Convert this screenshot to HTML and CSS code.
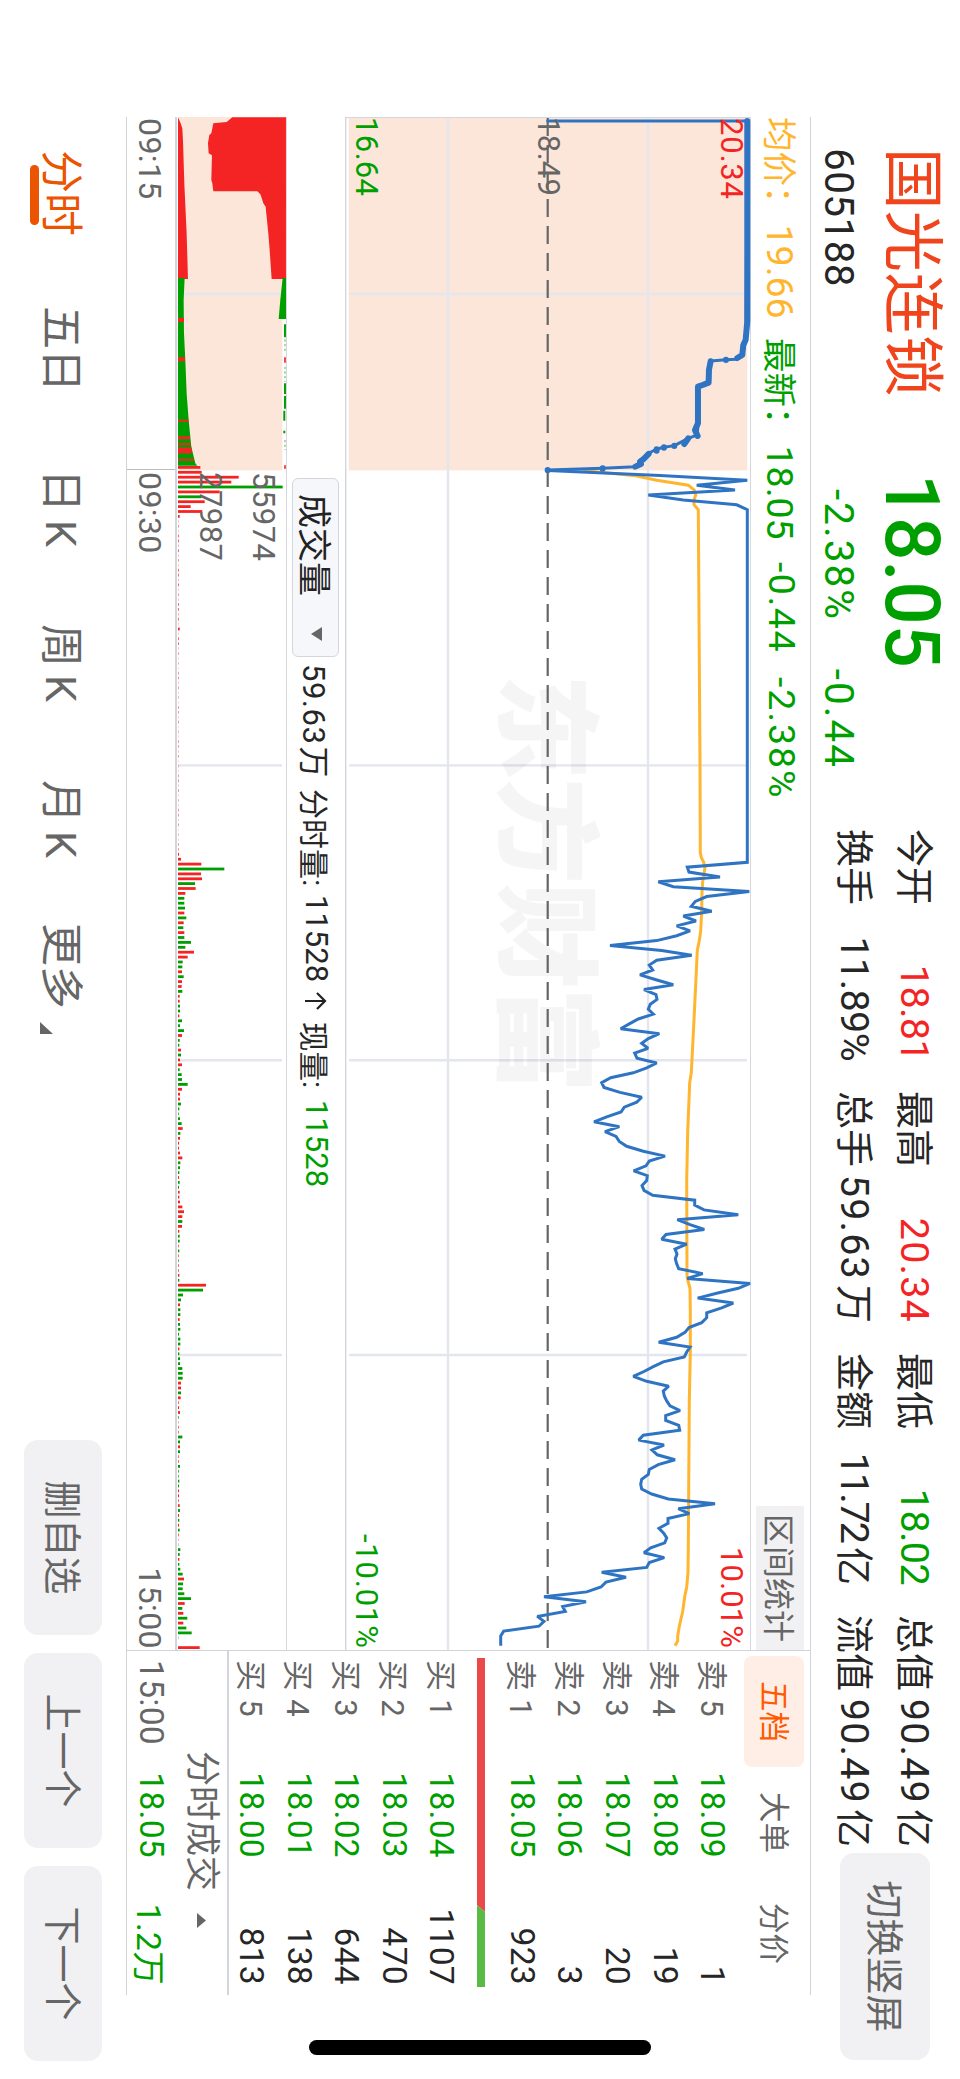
FILE: index.html
```html
<!DOCTYPE html>
<html lang="zh-CN">
<head>
    <meta charset="UTF-8">
    <meta name="viewport" content="width=device-width, initial-scale=1.0">
    <title>国光连锁 605188</title>
    <link rel="stylesheet" href="styles.css">
</head>
<body>
    <div class="screen">
        <!-- Quote header -->
        <header class="header">
            <div class="stock">
                <h1>国光连锁</h1>
                <p>605188</p>
            </div>
            <div class="quote green">
                <div class="price">18.05</div>
                <div class="change"><span>-2.38%</span><span>-0.44</span></div>
            </div>
            <div class="stats">
                <div><label>今开</label><span class="red narrow">18.81</span></div>
                <div><label>最高</label><span class="red">20.34</span></div>
                <div><label>最低</label><span class="green narrow">18.02</span></div>
                <div><label>总值</label><span>90.49<i>亿</i></span></div>
                <div><label>换手</label><span class="narrow">11.89%</span></div>
                <div><label>总手</label><span>59.63<i>万</i></span></div>
                <div><label>金额</label><span class="narrower">11.72<i>亿</i></span></div>
                <div><label>流值</label><span>90.49<i>亿</i></span></div>
            </div>
            <button class="btn btn-switch">切换竖屏</button>
        </header>

        <main class="main">
            <!-- Charts -->
            <section class="charts">
                <div class="info">
                    <span class="orange avg"><i>均价：</i>19.66</span>
                    <span class="green last"><i>最新：</i>18.05</span>
                    <span class="green diff">-0.44</span>
                    <span class="green pct">-2.38%</span>
                    <button class="range">区间统计</button>
                </div>

                <svg class="price-chart" viewBox="117 209 1533 406" width="1533" height="406">
                    <rect x="117" y="212.7" width="353.4" height="398.6" fill="#fce6d9"/>
                    <g stroke="#e4e6ee" stroke-width="2.4">
                        <path d="M117 312H1650M117 512H1650"/>
                        <path d="M294 213V611M765.4 213V611M1060.3 213V611M1355 213V611"/>
                    </g>
                    <path d="M117 209.5H1650M117.5 209V615" stroke="#d5d7dd" fill="none"/>
                    <path d="M117 614.6H1650" stroke="#d2d5db" stroke-width="2"/>
                    <text class="watermark" x="674" y="452" textLength="419">东方财富</text>
                    <path d="M117 412.3H1650" stroke="#666" stroke-width="2.2" stroke-dasharray="18 9" stroke-dashoffset="-1"/>
                    <polyline id="avgLine" fill="none" stroke="#ffb52e" stroke-width="3"/>
                    <polyline id="priceLine" fill="none" stroke="#2f74c3" stroke-width="3" stroke-miterlimit="2"/>
                    <g transform="translate(100 620) scale(.3333 -.3333)" fill="none" stroke="#2f74c3" stroke-linejoin="round" stroke-linecap="round">
                        <polyline stroke-width="9" points="63,623 63,1222 720,1218 765,1207 778,1190 779,1158 783,1112 848,1106 860,1074 970,1074 1005,1072 1015,1045 1037,1003 1042,972 1047,950 1060,926 1100,886 1105,788 1110,623"/>
                        <g stroke-width="18">
                            <path d="M63 1222H665L720 1217L735 1210L765 1207L774 1192"/>
                            <path d="M784 1112L810 1107L848 1106L855 1088L860 1074H970L990 1065L1008 1073"/>
                            <path d="M1015 1045L1032 1033M1048 950L1052 950M1062 926L1078 910L1085 900L1092 903L1100 886"/>
                            <path d="M779 1158h1M1037 1003h1M1042 972h1M1105 788h1M1110 623h1"/>
                        </g>
                    </g>
                    <text class="red" x="118" y="239" textLength="81">20.34</text>
                    <text class="gray" x="117" y="422" textLength="79">18.49</text>
                    <text class="green" x="117" y="604" textLength="79">16.64</text>
                    <text class="red" x="1547" y="239" textLength="101">10.01%</text>
                    <text class="green" x="1534" y="604" textLength="114">-10.01%</text>
                </svg>

                <div class="vol-info">
                    <button class="indicator">成交量
                        <svg width="14" height="11" viewBox="0 0 14 11"><path d="M0 0H14L7 11Z" fill="#666"/></svg>
                    </button>
                    <span class="v1">59.63<i>万</i></span>
                    <span class="v2">分时量:</span>
                    <span class="v3">11528</span>
                    <svg class="arrow" width="18" height="22" viewBox="0 0 18 22"><path d="M9 22V2M1 10L9 2L17 10" fill="none" stroke="#222" stroke-width="2.2"/></svg>
                    <span class="v4">现量:</span>
                    <span class="green">11528</span>
                </div>

                <svg class="vol-chart" viewBox="117 673 1533 112" width="1533" height="112">
                    <rect x="117" y="674" width="202" height="108" fill="#fce6d9"/>
                    <rect x="319" y="677.6" width="151.4" height="104.4" fill="#fce6d9"/>
                    <path d="M294 678V782M765.4 678V782M1060.3 678V782M1355 678V782" stroke="#e4e6ee" stroke-width="2.4"/>
                    <g transform="translate(100 960) scale(.3333 -.3333)">
                        <g fill="#f52424">
                            <path d="M52 858V697L66 680L70 640L100 634L105 628L130 624L160 626L166 636L240 634L250 637L274 640V772L280 778L284 782L310 790L320 797L400 805L450 809L537 815V858Z"/>
                            <path d="M52 534L70 542L85 547L120 549L250 553L400 560L537 564V534Z"/>
                        </g>
                        <g fill="#009f00">
                            <path d="M534 858V848L600 841L657 836V858Z"/>
                            <path d="M534 534V554L600 551L700 552L780 556L880 560L960 566L1040 574L1090 586L1097 592V534Z"/>
                        </g>
                        <path d="M660 534v18M778 534v21" stroke="#f52424" stroke-width="12"/>
                        <path d="M962 534v32M1032 534v39M1052 534v41M1079 534v48" stroke="#f52424" stroke-width="6"/>
                        <path d="M1047 534v41M1056 534v41M1013 534v36" stroke="#f52424" stroke-width="9"/>
                        <path d="M673 855H712M850 855H882M888 855H926M932 853H962M992 853H1000" stroke="#009f00" stroke-width="6"/>
                        <path d="M718 855H760M800 855H845M1020 855H1050" stroke="#009f00" stroke-width="4" stroke-dasharray="7 7" opacity=".5"/>
                        <path d="M772 855H788M1096 855H1106" stroke="#f52424" stroke-width="5"/>
                    </g>
                    <g id="volBars"></g>
                    <path d="M117 673.5H1650" stroke="#d5d7dd"/>
                    <path d="M117 784H1650" stroke="#d2d5db" stroke-width="2"/>
                    <text class="gray" x="472" y="707" textLength="89">55974</text>
                    <text class="gray" x="472" y="760" textLength="89">27987</text>
                </svg>

                <div class="axis">
                    <span class="open">09:15</span>
                    <span class="start">09:30</span>
                    <span class="end">15:00</span>
                </div>
            </section>

            <!-- Order book -->
            <aside class="book">
                <div class="tabs">
                    <span class="active">五档</span><span>大单</span><span>分价</span>
                </div>
                <div class="orders sell">
                    <div><label>卖 5</label><b>18.09</b><em>1</em></div>
                    <div><label>卖 4</label><b>18.08</b><em>19</em></div>
                    <div><label>卖 3</label><b>18.07</b><em>20</em></div>
                    <div><label>卖 2</label><b>18.06</b><em>3</em></div>
                    <div><label>卖 1</label><b>18.05</b><em>923</em></div>
                </div>
                <svg class="ratio" width="329" height="8" viewBox="0 0 329 8">
                    <path d="M0 0H254L247 8H0Z" fill="#ea4849"/>
                    <path d="M254 0H329V8H247Z" fill="#5bba46"/>
                </svg>
                <div class="orders buy">
                    <div><label>买 1</label><b>18.04</b><em>1107</em></div>
                    <div><label>买 2</label><b>18.03</b><em>470</em></div>
                    <div><label>买 3</label><b>18.02</b><em>644</em></div>
                    <div><label>买 4</label><b>18.01</b><em>138</em></div>
                    <div><label>买 5</label><b>18.00</b><em>813</em></div>
                </div>
                <div class="deals">
                    分时成交
                    <svg width="15" height="9" viewBox="0 0 15 9"><path d="M0 9L7.5 0L15 9Z" fill="#666"/></svg>
                </div>
                <div class="deal"><span>15:00</span><b>18.05</b><em>1.2万</em></div>
            </aside>
        </main>

        <!-- Period tabs -->
        <footer class="footer">
            <nav>
                <a class="active">分时</a>
                <a>五日</a>
                <a>日<i>K</i></a>
                <a>周<i>K</i></a>
                <a>月<i>K</i></a>
                <a class="more">更多<svg width="12" height="13" viewBox="0 0 12 13"><path d="M12 0V13H0Z" fill="#666"/></svg></a>
            </nav>
            <button class="btn">删自选</button>
            <button class="btn">上一个</button>
            <button class="btn">下一个</button>
        </footer>

        <div class="home-bar"></div>
    </div>

    <script src="chart.js"></script>
</body>
</html>
```
FILE: styles.css
```css
* {
    margin: 0;
    padding: 0;
    box-sizing: border-box;
}

html {
    overflow: hidden;
}

body {
    width: 960px;
    height: 2079px;
    overflow: hidden;
    background: #fff;
    color: #262626;
    font-family: Roboto, "Noto Sans CJK SC", sans-serif;
}

/* landscape screen shown on a portrait device */
.screen {
    position: relative;
    width: 2079px;
    height: 960px;
    overflow: hidden;
    background: #fff;
    transform-origin: 0 0;
    transform: translateX(960px) rotate(90deg);
}

button {
    border: none;
    font-family: inherit;
    color: #666;
}

i, em {
    font-style: normal;
}

.red { color: #f52424; fill: #f52424; }
.green { color: #009f00; fill: #009f00; }
.gray { fill: #666; }
.orange { color: #ffb52e; }

/* Header */
.header {
    display: flex;
    height: 149px;
    padding-left: 148px;
}

.stock {
    width: 326px;
    padding-top: 18px;
    white-space: nowrap;
}

.stock h1 {
    font-size: 61.5px;
    font-weight: 400;
    line-height: 60px;
    letter-spacing: 0.9px;
    color: #f0451c;
}

.stock p {
    margin-top: 23px;
    font-size: 40.5px;
    line-height: 40px;
    letter-spacing: 0.4px;
}

.quote {
    width: 355px;
    padding-top: 18px;
    white-space: nowrap;
}

.price {
    font-size: 76px;
    font-weight: 500;
    line-height: 60px;
}

.change {
    display: flex;
    gap: 48px;
    margin-top: 23px;
    padding-left: 15px;
    font-size: 40.5px;
    line-height: 40px;
    letter-spacing: 2px;
}

.stats {
    display: grid;
    grid-template-columns: repeat(4, 232px);
    grid-auto-rows: 60px;
    column-gap: 30px;
    padding-top: 16px;
    font-size: 39.5px;
    line-height: 60px;
    white-space: nowrap;
}

.stats div {
    display: flex;
    justify-content: space-between;
}

.stats label,
.stats i {
    font-size: 38px;
}

.stats i {
    margin-left: 5px;
    letter-spacing: 0;
}

.stats span {
    letter-spacing: 1.2px;
}

.stats .narrow { letter-spacing: -0.6px; }
.stats .narrower { letter-spacing: -2px; }

.btn {
    width: 195px;
    height: 78px;
    padding-bottom: 6px;
    border-radius: 14px;
    background: #f1f1f3;
    font-size: 38px;
}

.btn-switch {
    width: 207px;
    height: 90px;
    margin: 30px 0 0 6px;
}

/* Main */
.main {
    display: flex;
    width: 1878px;
    height: 685px;
    margin-left: 117px;
    border-top: 1px solid #d2d2da;
    border-bottom: 1px solid #d2d2da;
}

.charts {
    width: 1533px;
}

.charts svg {
    display: block;
}

.info {
    display: flex;
    align-items: center;
    height: 59px;
    padding-bottom: 3px;
    font-size: 37.5px;
    white-space: nowrap;
}

.info i {
    margin-right: 4px;
    font-size: 34.5px;
}

.avg { width: 221px; }
.last { width: 224px; }
.diff { width: 115px; letter-spacing: 1.5px; }
.pct { letter-spacing: 1.9px; }

.range {
    align-self: flex-start;
    width: 144px;
    height: 48px;
    margin: 6px 0 0 auto;
    padding-bottom: 2px;
    background: #f1f1f3;
    font-size: 32px;
}

.charts text {
    font-size: 31px;
}

.charts .watermark {
    font-size: 106px;
    font-weight: 900;
    opacity: 0.035;
}

.vol-info {
    display: flex;
    align-items: center;
    height: 58px;
    padding-left: 361px;
    font-size: 31px;
    white-space: nowrap;
}

.vol-info span {
    padding-bottom: 1px;
}

.indicator {
    display: flex;
    align-items: center;
    justify-content: space-between;
    width: 179px;
    height: 47px;
    margin-right: 7px;
    padding: 0 15px 2px;
    border: 1.5px solid #d3d7dd;
    border-radius: 6px;
    background: #f6f7fa;
    color: #222;
    font-size: 34px;
}

.v1 { width: 125px; letter-spacing: 0.5px; }
.v1 i { margin-left: 2px; }
.v2 { width: 106px; font-size: 30px; }
.v3 { width: 97px; }
.v4 { width: 78px; margin-left: 12px; font-size: 29.5px; }

.axis {
    display: flex;
    height: 48px;
    color: #666;
    font-size: 32px;
    line-height: 51px;
    letter-spacing: 0.4px;
}

.open {
    width: 353px;
    padding-left: 1px;
    border-right: 1px solid #bbb;
}

.start { margin-left: 2px; }
.end { margin-left: auto; padding-right: 1px; }

/* Order book */
.book {
    width: 345px;
    border-left: 1px solid #d2d2da;
    color: #666;
}

.tabs {
    display: flex;
    padding: 6px 0 0 5px;
}

.tabs span {
    width: 111px;
    height: 60px;
    border-radius: 8px;
    font-size: 30.5px;
    line-height: 61px;
    text-align: center;
}

.tabs .active {
    background: #ffeee6;
    color: #ff5a00;
}

.orders div,
.deal {
    display: grid;
    grid-template-columns: 90px 108px 1fr;
    align-items: center;
    height: 47.7px;
    padding: 0 10px 0 9px;
    font-size: 33.5px;
    letter-spacing: 0.3px;
}

.orders label {
    padding-bottom: 3px;
    font-size: 31px;
}

.orders b,
.deal b {
    color: #009f00;
    font-weight: 400;
    text-align: right;
}

.orders em {
    color: #262626;
    text-align: right;
}

.sell {
    margin-top: 7px;
}

.ratio {
    display: block;
    margin: 14px 0 11px 7px;
}

.buy div {
    height: 47.4px;
}

.deals {
    display: flex;
    align-items: center;
    gap: 22px;
    height: 50px;
    padding-left: 100px;
    padding-bottom: 6px;
    border-top: 2px solid #d2d5db;
    font-size: 35px;
}

.deals svg {
    margin-top: 8px;
}

.deal {
    height: 54px;
}

.deal em {
    color: #009f00;
    text-align: right;
}

/* Footer */
.footer {
    display: flex;
    align-items: center;
    gap: 18px;
    height: 126px;
    padding-left: 150px;
}

nav {
    display: flex;
    width: 1272px;
    padding-top: 3px;
    color: #666;
    font-size: 43px;
    line-height: 60px;
    white-space: nowrap;
}

nav a {
    position: relative;
    width: 156px;
}

nav i {
    margin-left: 8px;
}

nav a:nth-child(2) { width: 163px; }
nav a:nth-child(3) { width: 155px; }
nav a:nth-child(5) { width: 143px; }

nav .active {
    color: #eb5400;
}

nav .active::after {
    content: "";
    position: absolute;
    left: 15px;
    bottom: -1px;
    width: 60px;
    height: 9px;
    border-radius: 5px;
    background: #eb5400;
}

.more svg {
    margin-left: 13px;
    vertical-align: -6px;
}

.home-bar {
    position: absolute;
    right: 24px;
    top: 309px;
    width: 15px;
    height: 342px;
    border-radius: 8px;
    background: #000;
}
```
FILE: chart.js
```js
// heights above the lower edge, in thirds of a pixel, one value per minute
const open = [623, 960, 1222, 1070, 1185, 925, 1030, 1190];
const flat = new Array(73).fill(1222);
const rest = [
    1042, 1047, 1140, 955, 1000, 1228, 1100, 1066, 1054, 1115, 1030, 1068, 1010, 1050, 1010, 950, 810, 965, 1055, 950,
    928, 938, 900, 948, 1000, 912, 948, 951, 931, 925, 940, 895, 868, 842, 958, 925, 905, 924, 884, 891,
    950, 920, 880, 812, 785, 792, 840, 905, 890, 853, 843, 800, 762, 838, 795, 828, 838, 860, 910, 975,
    928, 918, 881, 922, 920, 906, 912, 938, 1064, 1064, 1092, 1195, 1012, 1050, 1093, 978, 965, 1040, 1005, 1011,
    1006, 1010, 1016, 1088, 1042, 1230, 1195, 1130, 1073, 1180, 1145, 1100, 1100, 1085, 1047, 1035, 1010, 956, 1050, 1040,
    1033, 970, 940, 912, 880, 920, 986, 970, 973, 980, 990, 1020, 977, 977, 1016, 1019, 910, 896, 972, 936,
    952, 1005, 955, 928, 925, 905, 902, 905, 935, 985, 1125, 1015, 1048, 984, 984, 957, 971, 980, 974, 932,
    912, 973, 928, 920, 785, 858, 798, 783, 740, 612, 738, 668, 676, 592, 612, 597, 491, 482, 482, 482
];
const prices = open.concat(flat, rest);

const avg = [
    [0, 730], [1, 880], [2, 950], [3, 1045], [4, 1063], [5, 1067], [6, 1062], [7, 1062], [8, 1075], [60, 1080],
    [78, 1081], [79, 1084], [80, 1091], [81, 1095], [82, 1093], [84, 1088], [86, 1086], [90, 1085], [94, 1082], [96, 1078],
    [98, 1072], [105, 1067], [115, 1060], [123, 1054], [125, 1049], [135, 1043], [145, 1040], [164, 1041], [165, 1042],
    [167, 1050], [172, 1051], [180, 1051], [190, 1048], [220, 1045], [225, 1044], [228, 1040], [230, 1034], [233, 1028],
    [236, 1018], [238, 1013], [239, 1013], [240, 1005]
];

// volume per minute, negative values are drawn green
const volumes = [71, 182, 160, -314, 125, -70, 80, 38, 73, 5];
for (let i = 10; i < 78; i++) {
    volumes.push(i === 32 ? 5 : [2, 1, 2, 0.7, 1.4, 0.7, 2][i % 7] * (i > 35 ? 0.7 : 1));
}
volumes.push(
    3, 9, 70, -139, 69, 72, -51, 53, 22, -19, -19, -21, 19, -25, 17, -16, 19, -19, -39, -22, 48, 29,
    -14, -13, 12, -17, 12, 11, -13, 5, 5, -6, -6, 4, -12, -6, -18, 12, -5, -4, 9, -9,
    6, 12, -5, -11, -12, -29, 12, 6, 6, -9, -4, -2, -6, -11, 14, -7, 6, 3, 3, 6,
    13, -7, -6, -4, 3, -5, -3, 5, 4, 6, 13, 18, 13, -13, 12, 4, -5, -5, 2, -4,
    2, -2, 2, 2, 4, -4, 84, -75, -15, -9, 6, -7, -7, 5, -6, -7, -3, -7, -7, 4,
    -4, -6, -6, -13, -14, -14, 9, 9, -9, 8, 2, 3, 6, -2, 1, 2, 2, -13, -6, 6,
    -6, 2, 2, -6, -2, -2, -4, -3, 3, 3, 2, 5, -6, 3, -4, 3, -5, 2, 1, -1,
    -7, -5, 4, -4, -7, -14, 18, -15, -14, -19, -39, 20, -13, 16, -28, 16, -25, -41, -1, 0, 65
);

const step = 4.897;
const point = (i, v) => `${(470.5 + step * i).toFixed(1)},${(620 - v / 3).toFixed(1)}`;

document.getElementById('priceLine').setAttribute('points', prices.map((v, i) => point(i, v)).join(' '));
document.getElementById('avgLine').setAttribute('points', avg.map(([i, v]) => point(i, v)).join(' '));

function bar(i, v) {
    const h = Math.abs(v) / 3;
    const x = 472.3 + step * i - 1.4;
    return `<rect x="${x.toFixed(1)}" y="${(782 - h).toFixed(2)}" width="2.8" height="${h.toFixed(2)}" fill="${v > 0 ? '#f52424' : '#009f00'}"/>`;
}

document.getElementById('volBars').innerHTML = bar(-1, 67) + volumes.map((v, i) => bar(i, v)).join('');
```
